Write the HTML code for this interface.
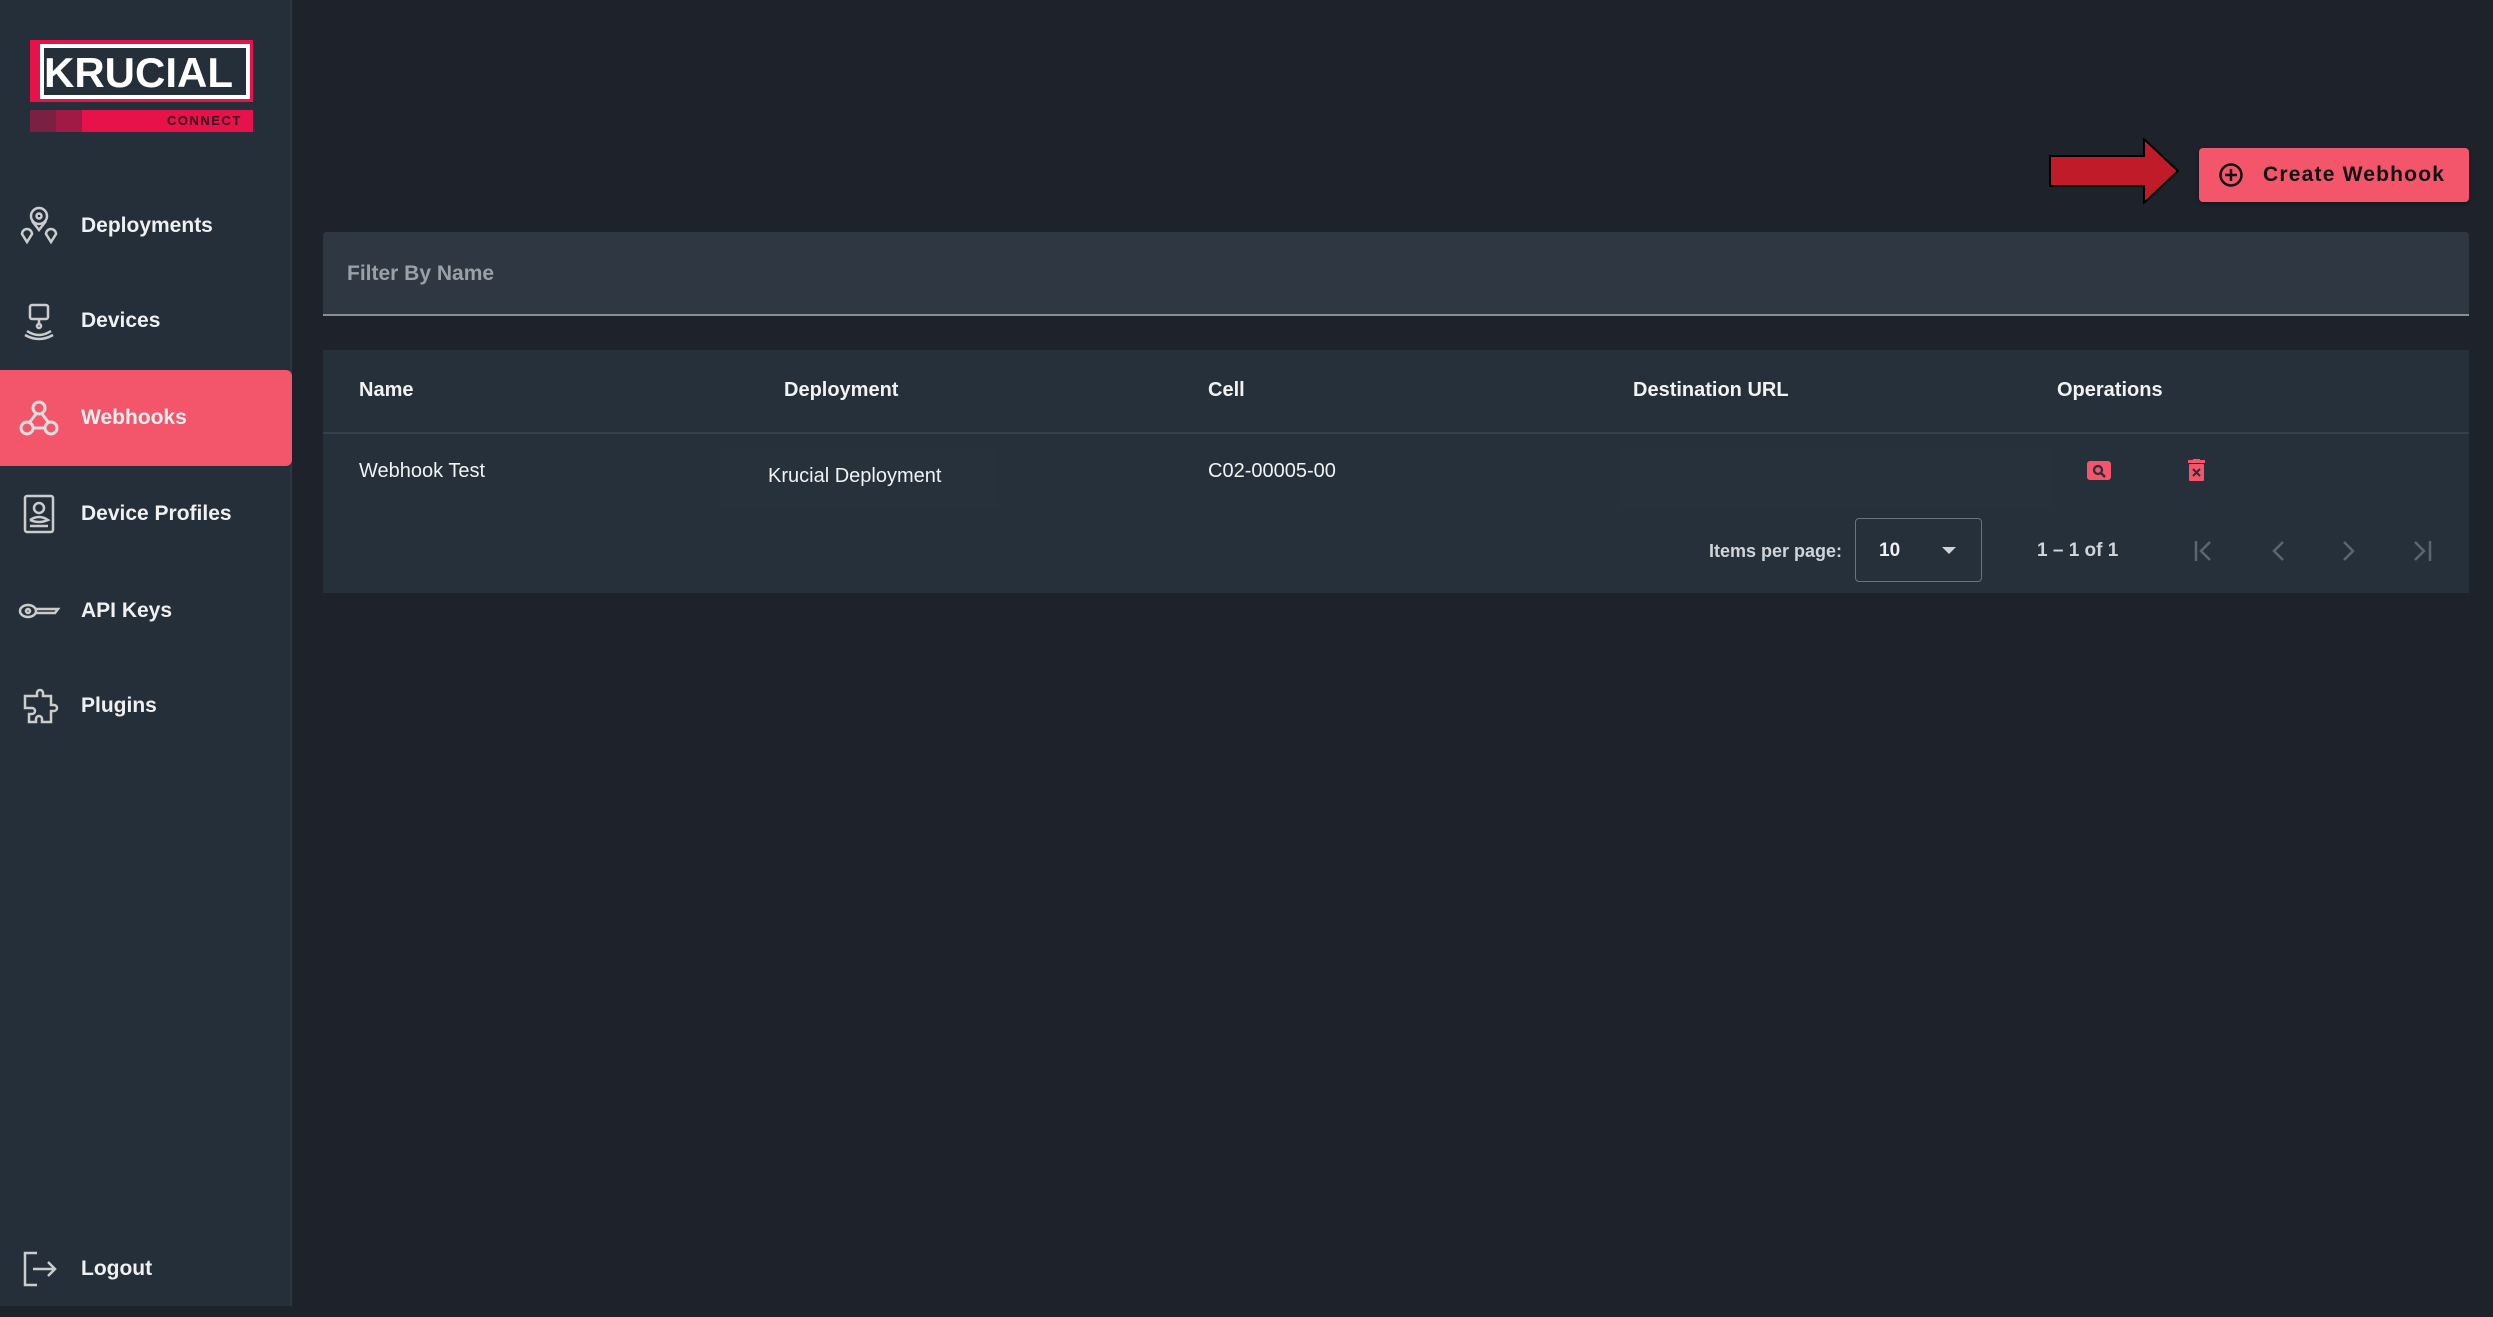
<!DOCTYPE html>
<html><head><meta charset="utf-8"><style>
*{margin:0;padding:0;box-sizing:border-box}
body{width:2493px;height:1306px;background:#1e232b;font-family:"Liberation Sans",Arial,sans-serif;color:#fff;position:relative;overflow:hidden}
.side{position:absolute;left:0;top:0;width:292px;height:1306px;background:#252f3a;border-right:2px solid #2c3540}
.nav{position:absolute;left:0;width:292px;height:96px;display:flex;align-items:center}
.nav svg{position:absolute;left:17px;width:44px;height:44px}
.nav span{position:absolute;left:81px;font-size:21px;font-weight:bold;color:#f0f0f0}
.active{background:#f3566b;border-radius:0 6px 6px 0}
.abs{position:absolute}
.th{position:absolute;top:379px;font-size:20px;font-weight:bold;color:#f2f2f2}
.td{position:absolute;font-size:20px;color:#f2f2f2}
</style></head><body>
<div class="side">
  <div class="abs" style="left:30px;top:40px;width:223px;height:92px">
    <div class="abs" style="left:0;top:0;width:223px;height:62px;background:#e8124a"></div>
    <div class="abs" style="left:10px;top:4px;width:210px;height:55px;border:4px solid #fff;background:#252f3a"></div>
    <div class="abs" style="left:14px;top:8px;font-size:42px;font-weight:bold;letter-spacing:0px;color:#fff;line-height:50px">KRUCIAL</div>
    <div class="abs" style="left:0;top:70px;width:223px;height:22px;background:#e8124a"></div>
    <div class="abs" style="left:0;top:70px;width:26px;height:22px;background:#7a2040"></div>
    <div class="abs" style="left:26px;top:70px;width:26px;height:22px;background:#a01a45"></div>
    <div class="abs" style="left:137px;top:70px;font-size:13px;font-weight:bold;color:#3a1020;line-height:22px;letter-spacing:1.5px">CONNECT</div>
  </div>
  <div class="nav" style="top:178px"><svg viewBox="0 0 44 44" fill="none" stroke="#ccc" stroke-width="2.5"><circle cx="22" cy="12" r="8"/><circle cx="22" cy="12" r="2.5"/><path d="M15 17 L22 26 L29 17"/><path d="M5 30 a5 5 0 0 1 10 0 L10 38 Z"/><path d="M29 30 a5 5 0 0 1 10 0 L34 38 Z"/></svg><span>Deployments</span></div>
  <div class="nav" style="top:273px"><svg viewBox="0 0 44 44" fill="none" stroke="#ccc" stroke-width="2.5"><rect x="13" y="6" width="18" height="14" rx="2"/><path d="M22 20v5"/><circle cx="22" cy="27" r="2"/><path d="M10 32 q12 8 24 0"/><path d="M8 36 q14 8 28 0"/></svg><span>Devices</span></div>
  <div class="nav active" style="top:370px"><svg viewBox="0 0 44 44" fill="none" stroke="#ddd" stroke-width="3"><circle cx="22" cy="12" r="6"/><circle cx="10" cy="32" r="6"/><circle cx="34" cy="32" r="6"/><path d="M19 18 L12 27 M16 32 H28 M25 18 L32 27"/></svg><span>Webhooks</span></div>
  <div class="nav" style="top:466px"><svg viewBox="0 0 44 44" fill="none" stroke="#ccc" stroke-width="2.5"><rect x="8" y="4" width="28" height="36" rx="2"/><circle cx="22" cy="16" r="5"/><path d="M13 28 q9-6 18 0 q-9 4-18 0"/><path d="M13 34h18"/></svg><span>Device Profiles</span></div>
  <div class="nav" style="top:563px"><svg viewBox="0 0 44 44" fill="none" stroke="#ccc" stroke-width="2.5"><ellipse cx="11" cy="22" rx="8" ry="6"/><circle cx="11" cy="22" r="2"/><path d="M19 20h22l-3 4h-19"/></svg><span>API Keys</span></div>
  <div class="nav" style="top:658px"><svg viewBox="0 0 44 44" fill="none" stroke="#ccc" stroke-width="2.5"><path d="M12 12h8v-3a3 3 0 0 1 6 0v3h8v9h3a3 3 0 0 1 0 6h-3v11h-9v-3a3 3 0 0 0-6 0v3h-7v-8h3a3 3 0 0 0 0-6h-7v-12z"/></svg><span>Plugins</span></div>
  <div class="nav" style="top:1221px"><svg viewBox="0 0 44 44" fill="none" stroke="#ccc" stroke-width="2.5"><path d="M20 6H8v32h12"/><path d="M16 22h22M31 15l7 7-7 7"/></svg><span>Logout</span></div>
</div>

<svg class="abs" style="left:2049px;top:138px" width="130" height="66" viewBox="0 0 130 66"><path d="M1 18H95V1L129 33L95 65V48H1Z" fill="#c01b28" stroke="#000" stroke-width="2"/></svg>
<div class="abs" style="left:2199px;top:148px;width:270px;height:54px;background:#f3566b;border-radius:4px;box-shadow:0 2px 4px rgba(0,0,0,.4)">
  <svg class="abs" style="left:19px;top:14px" width="26" height="26" viewBox="0 0 26 26" fill="none" stroke="#111" stroke-width="2.5"><circle cx="13" cy="13" r="10.5"/><path d="M13 7v12M7 13h12"/></svg>
  <div class="abs" style="left:64px;top:15px;font-size:21px;font-weight:bold;letter-spacing:1.2px;color:#111">Create Webhook</div>
</div>

<div class="abs" style="left:323px;top:232px;width:2146px;height:84px;background:#2f3842;border-radius:4px 4px 0 0;border-bottom:2px solid #8a8f95"></div>
<div class="abs" style="left:347px;top:262px;font-size:21px;font-weight:bold;color:#9aa0a6">Filter By Name</div>

<div class="abs" style="left:323px;top:350px;width:2146px;height:243px;background:#25303b"></div>
<div class="abs" style="left:323px;top:432px;width:2146px;height:2px;background:#34404b"></div>
<div class="th" style="left:359px">Name</div>
<div class="th" style="left:784px">Deployment</div>
<div class="th" style="left:1208px">Cell</div>
<div class="th" style="left:1633px">Destination URL</div>
<div class="th" style="left:2057px">Operations</div>
<div class="abs" style="left:719px;top:448px;width:279px;height:61px;background:#26313c"></div>
<div class="abs" style="left:1621px;top:448px;width:430px;height:61px;background:#26313c"></div>
<div class="td" style="left:359px;top:460px">Webhook Test</div>
<div class="td" style="left:768px;top:465px">Krucial Deployment</div>
<div class="td" style="left:1208px;top:460px">C02-00005-00</div>
<svg class="abs" style="left:2087px;top:461px" width="24" height="19" viewBox="0 0 24 19"><rect width="24" height="19" rx="3" fill="#f3566b"/><circle cx="11" cy="9" r="4" fill="none" stroke="#25303b" stroke-width="2.2"/><path d="M14 12l4 4" stroke="#25303b" stroke-width="2.5"/></svg>
<svg class="abs" style="left:2188px;top:459px" width="17" height="22" viewBox="0 0 17 22"><rect x="0" y="1" width="17" height="3" fill="#f3566b"/><rect x="5" y="0" width="7" height="2" fill="#f3566b"/><rect x="1" y="5" width="15" height="17" rx="1" fill="#f3566b"/><path d="M5 10l7 7M12 10l-7 7" stroke="#25303b" stroke-width="2"/></svg>

<div class="abs" style="left:1709px;top:541px;font-size:18px;font-weight:bold;color:#d0d4d8">Items per page:</div>
<div class="abs" style="left:1855px;top:518px;width:127px;height:64px;border:1px solid #6b737b;border-radius:4px"></div>
<div class="abs" style="left:1879px;top:540px;font-size:19px;font-weight:bold;color:#f0f0f0">10</div>
<svg class="abs" style="left:1942px;top:547px" width="14" height="8"><path d="M0 0h14L7 7z" fill="#d0d4d8"/></svg>
<div class="abs" style="left:2037px;top:540px;font-size:19px;font-weight:bold;color:#d0d4d8">1 – 1 of 1</div>
<svg class="abs" style="left:2194px;top:539px" width="240" height="24" viewBox="0 0 240 24" fill="none" stroke="#5d656e" stroke-width="2.5"><path d="M2 2v20M16 3l-9 9 9 9"/><path d="M89 3l-9 9 9 9"/><path d="M150 3l9 9-9 9"/><path d="M221 3l9 9-9 9M236 2v20"/></svg>
</body></html>
